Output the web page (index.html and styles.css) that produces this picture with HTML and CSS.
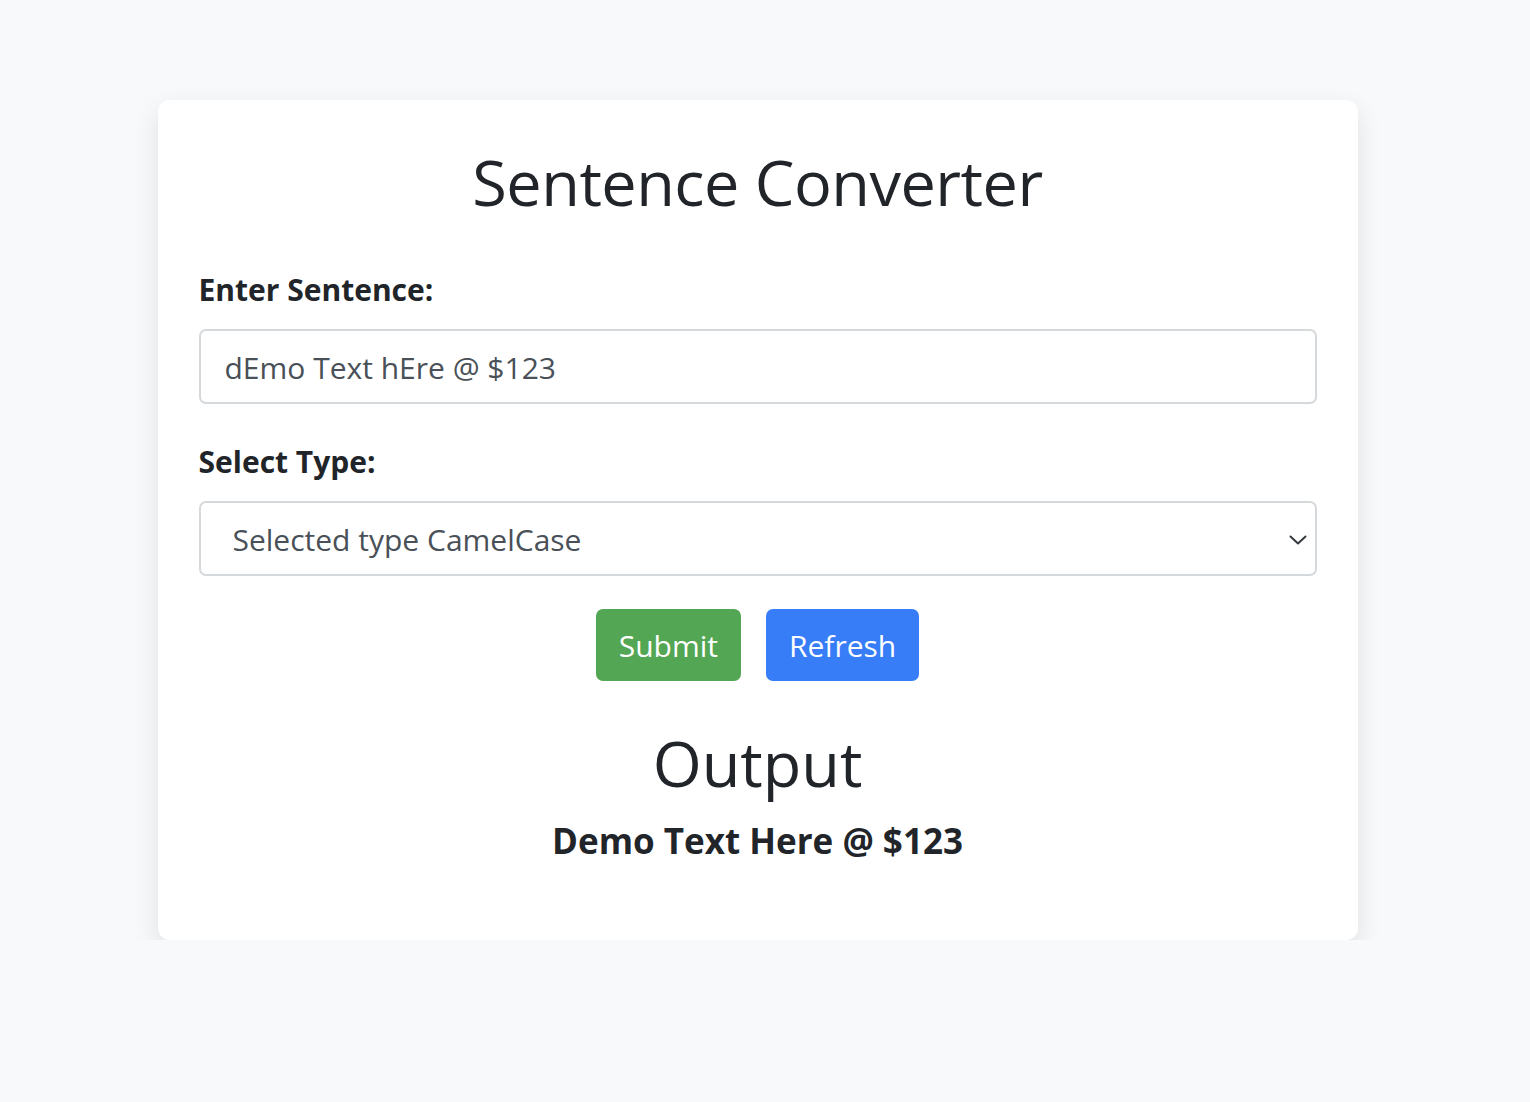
FILE: index.html
```html
<!DOCTYPE html>
<html lang="en">
<head>
<meta charset="utf-8">
<title>Sentence Converter</title>
<link rel="stylesheet" href="styles.css">
</head>
<body>
<div class="page">
  <div class="card">
    <h1 class="title">Sentence Converter</h1>
    <label class="label label-first" for="sentence">Enter Sentence:</label>
    <input class="field" id="sentence" type="text" value="dEmo Text hEre @ $123">
    <div class="label label-second">Select Type:</div>
    <div class="field select">
      <span class="select-text">Selected type CamelCase</span>
      <svg class="chevron" width="18" height="10" viewBox="0 0 18 10" aria-hidden="true"><path d="M1.5 1.5l7.5 7 7.5-7" fill="none" stroke="#343a40" stroke-width="2" stroke-linecap="round" stroke-linejoin="round"/></svg>
    </div>
    <div class="actions">
      <button class="btn btn-green" type="button">Submit</button>
      <button class="btn btn-blue" type="button">Refresh</button>
    </div>
    <h2 class="output-title">Output</h2>
    <div class="output-text">Demo Text Here @ $123</div>
  </div>
</div>
</body>
</html>
```

FILE: styles.css
```css
html, body {
  margin: 0;
  padding: 0;
  background: #f8f9fa;
}
body {
  font-family: "Open Sans", "Noto Sans", "DejaVu Sans", sans-serif;
  color: #212529;
}
.page {
  width: 1515px;
  padding-top: 100px;
}
.card {
  box-sizing: border-box;
  width: 1200px;
  height: 840px;
  margin: 0 auto;
  background: #fff;
  border-radius: 12px;
  box-shadow: 0 10px 26px rgba(0, 0, 0, 0.1);
  padding: 40px 41px;
  display: flex;
  flex-direction: column;
}
.title {
  margin: 0;
  text-align: center;
  font-size: 63px;
  font-weight: 500;
  line-height: 84px;
  letter-spacing: -0.5px;
}
.label {
  display: block;
  font-weight: 700;
  font-size: 30px;
  line-height: 40px;
}
.label-first { margin-top: 46px; margin-bottom: 19px; }
.label-second { margin-top: 38px; margin-bottom: 19px; }
.field {
  box-sizing: border-box;
  width: 100%;
  height: 75px;
  border: 2px solid #d6d9dc;
  border-radius: 7px;
  background: #fff;
  font-family: inherit;
  font-size: 30px;
  line-height: 75px;
  color: #495057;
  padding: 2px 24px 0;
  outline: none;
}
.select {
  display: flex;
  align-items: center;
  justify-content: space-between;
  padding: 2px 8px 0 32px;
}
.actions {
  display: flex;
  justify-content: center;
  gap: 25px;
  margin-top: 33px;
}
.btn {
  font-family: inherit;
  font-size: 30px;
  color: #fff;
  border: none;
  border-radius: 7px;
  height: 72px;
  padding: 0 23px;
  cursor: pointer;
}
.btn-green { background: #53a653; }
.btn-blue { background: #377df7; }
.output-title {
  margin: 46px 0 0;
  text-align: center;
  font-size: 63px;
  font-weight: 500;
  line-height: 72px;
}
.output-text {
  margin-top: 20px;
  text-align: center;
  font-weight: 700;
  font-size: 35px;
  line-height: 44px;
}
```
